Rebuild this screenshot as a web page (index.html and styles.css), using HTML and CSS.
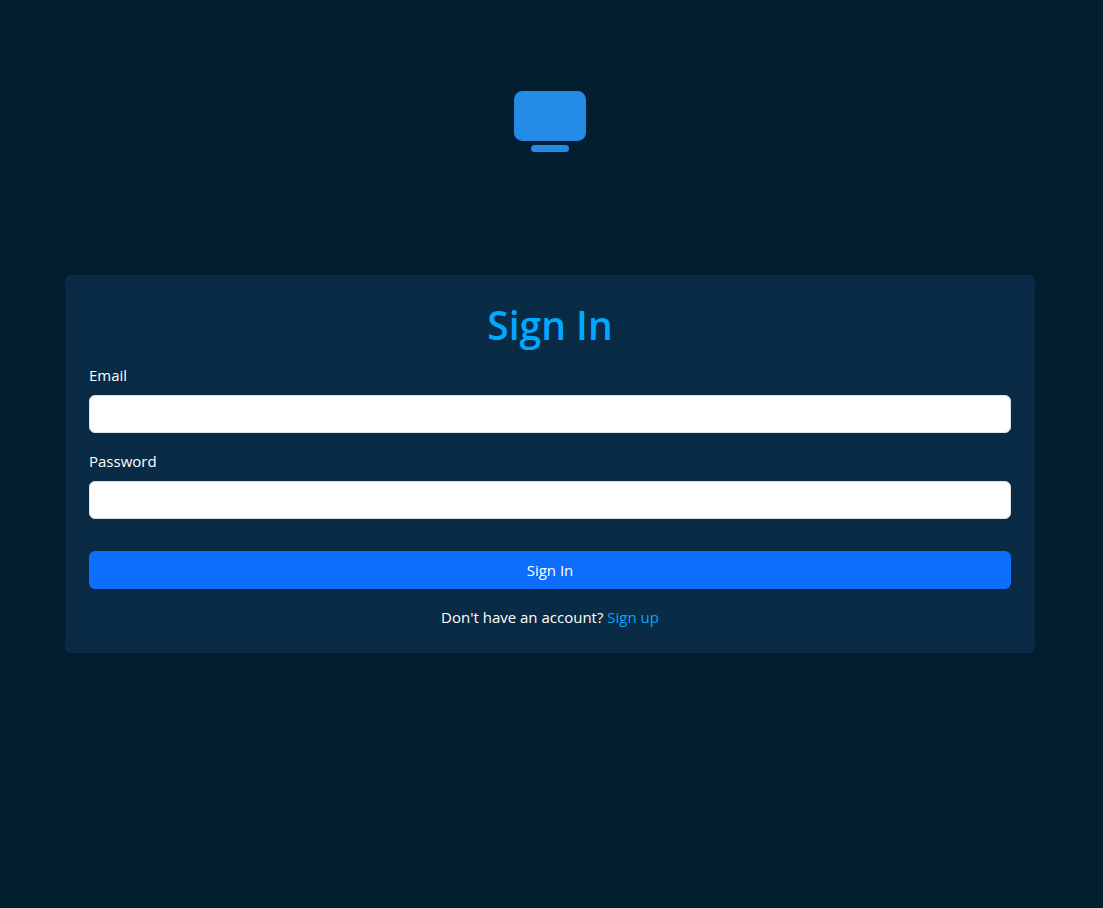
FILE: index.html
```html
<!DOCTYPE html>
<html lang="en">
<head>
<meta charset="utf-8">
<meta name="viewport" content="width=device-width, initial-scale=1">
<title>Sign In</title>
<link rel="stylesheet" href="styles.css">
</head>
<body>
<main class="page">
  <svg class="logo" viewBox="0 0 72 61" aria-hidden="true">
    <rect width="72" height="50" rx="8.5"/>
    <rect x="17" y="54" width="38" height="7" rx="3.5"/>
  </svg>
  <form class="card">
    <h1 class="title">Sign In</h1>
    <div class="field">
      <label for="email">Email</label>
      <input class="input" id="email" type="email">
    </div>
    <div class="field">
      <label for="password">Password</label>
      <input class="input" id="password" type="password">
    </div>
    <button class="submit" type="submit">Sign In</button>
    <p class="switch">Don't have an account? <a href="#signup">Sign up</a></p>
  </form>
</main>
</body>
</html>
```

FILE: styles.css
```css
*, *::before, *::after {
  box-sizing: border-box;
}

body {
  margin: 0;
  min-height: 100vh;
  background: #021f30;
  color: #fff;
  font: 15px/24px "Segoe UI", "Open Sans", "Noto Sans", sans-serif;
}

.page {
  display: flex;
  flex-direction: column;
  gap: 123px;
  padding: 91px 68px 48px 65px;
}

.logo {
  width: 72px;
  height: 61px;
  align-self: center;
  fill: #238be6;
}

.card {
  padding: 24px;
  border-radius: 5px;
  background: #092b45;
  box-shadow: 0 0 10px rgba(0, 0, 0, 0.1);
}

.title {
  margin: 0;
  padding: 2px 0 14px;
  color: #00a8ff;
  font-size: 39px;
  font-weight: 600;
  line-height: 48px;
  text-align: center;
}

.field {
  display: flex;
  flex-direction: column;
  gap: 8px;
  margin-bottom: 16px;
}

.input {
  width: 100%;
  height: 38px;
  padding: 6px 12px;
  border: 1px solid #dee2e6;
  border-radius: 6px;
  background: #fff;
  color: #212529;
  font: inherit;
}

.submit {
  display: block;
  width: 100%;
  height: 38px;
  margin-top: 32px;
  border: 0;
  border-radius: 6px;
  background: #0d6efd;
  color: #fff;
  font: inherit;
  cursor: pointer;
}

.switch {
  margin: 16px 0 0;
  text-align: center;
}

.switch a {
  color: #00a8ff;
  text-decoration: none;
}
```
